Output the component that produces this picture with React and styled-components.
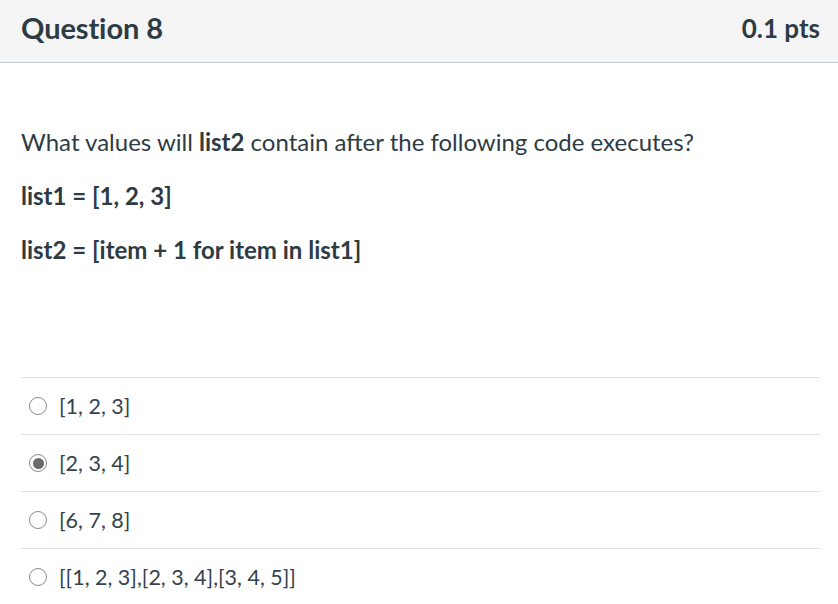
import React from 'react';
import styled, { createGlobalStyle } from 'styled-components';

const Global = createGlobalStyle`
  html, body {
    margin: 0;
    padding: 0;
    background: #fff;
    font-family: Lato, "Open Sans", sans-serif;
    color: #2d3b45;
  }
`;

const Card = styled.div`
  width: 838px;
`;

const Header = styled.div`
  display: flex;
  justify-content: space-between;
  align-items: center;
  height: 63px;
  padding: 0 18px 0 21px;
  box-sizing: border-box;
  background: #f5f5f5;
  border-bottom: 1px solid #c7cdd1;
`;

const Title = styled.h2`
  margin: 0;
  font-size: 29px;
  font-weight: 700;
  letter-spacing: -0.1px;
  padding-bottom: 8px;
`;

const Points = styled.span`
  font-size: 26px;
  font-weight: 700;
  padding-bottom: 6px;
`;

const Body = styled.div`
  padding: 61px 18px 0 21px;
`;

const Para = styled.p`
  margin: 0 0 18px;
  font-size: 24px;
  line-height: 36px;
`;

const Answers = styled.div`
  margin-top: 109px;
`;

const Answer = styled.label`
  display: flex;
  align-items: center;
  gap: 12px;
  height: 56px;
  padding-left: 8px;
  border-top: 1px solid #dfe3e6;
  font-size: 21.5px;
  color: #34434d;
`;

const Radio = styled.span`
  width: 18px;
  height: 18px;
  border-radius: 50%;
  border: 1px solid #8a8a8a;
  box-sizing: border-box;
  display: flex;
  align-items: center;
  justify-content: center;
  background: #fff;

  &::after {
    content: '';
    width: 11px;
    height: 11px;
    border-radius: 50%;
    background: ${(p) => (p.checked ? '#6b6b6b' : 'transparent')};
  }
`;

const answers = ['[1, 2, 3]', '[2, 3, 4]', '[6, 7, 8]', '[[1, 2, 3],[2, 3, 4],[3, 4, 5]]'];

export default function App() {
  return (
    <Card>
      <Global />
      <Header>
        <Title>Question 8</Title>
        <Points>0.1 pts</Points>
      </Header>
      <Body>
        <Para>
          What values will <b>list2</b> contain after the following code executes?
        </Para>
        <Para>
          <b>list1 = [1, 2, 3]</b>
        </Para>
        <Para>
          <b>list2 = [item + 1 for item in list1]</b>
        </Para>
        <Answers>
          {answers.map((a, i) => (
            <Answer key={i}>
              <Radio checked={i === 1} />
              <span>{a}</span>
            </Answer>
          ))}
        </Answers>
      </Body>
    </Card>
  );
}
